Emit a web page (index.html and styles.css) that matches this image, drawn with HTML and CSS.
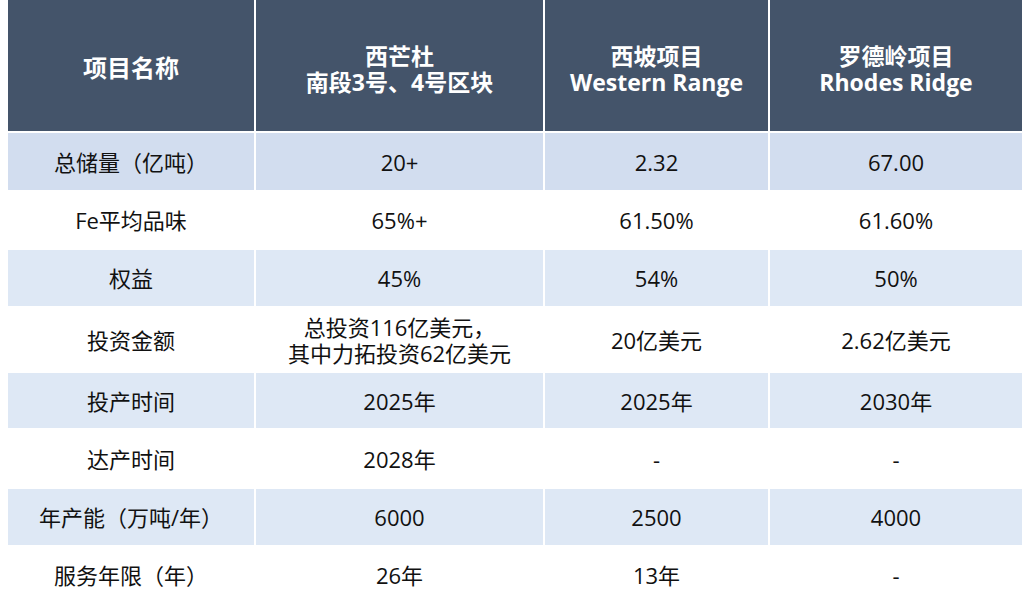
FILE: index.html
```html
<!DOCTYPE html>
<html lang="zh-CN">
<head>
<meta charset="utf-8">
<title>项目对比</title>
<link rel="stylesheet" href="styles.css">
</head>
<body>
<div class="table">
  <div class="cell head head-first">项目名称</div>
  <div class="cell head"><span class="line">西芒杜</span><span class="line">南段3号、4号区块</span></div>
  <div class="cell head"><span class="line">西坡项目</span><span class="line">Western Range</span></div>
  <div class="cell head"><span class="line">罗德岭项目</span><span class="line">Rhodes Ridge</span></div>

  <div class="cell shade1">总储量（亿吨）</div>
  <div class="cell shade1">20+</div>
  <div class="cell shade1">2.32</div>
  <div class="cell shade1">67.00</div>

  <div class="cell">Fe平均品味</div>
  <div class="cell">65%+</div>
  <div class="cell">61.50%</div>
  <div class="cell">61.60%</div>

  <div class="cell shade">权益</div>
  <div class="cell shade">45%</div>
  <div class="cell shade">54%</div>
  <div class="cell shade">50%</div>

  <div class="cell">投资金额</div>
  <div class="cell"><span class="line">总投资116亿美元，</span><span class="line">其中力拓投资62亿美元</span></div>
  <div class="cell">20亿美元</div>
  <div class="cell">2.62亿美元</div>

  <div class="cell shade">投产时间</div>
  <div class="cell shade">2025年</div>
  <div class="cell shade">2025年</div>
  <div class="cell shade">2030年</div>

  <div class="cell">达产时间</div>
  <div class="cell">2028年</div>
  <div class="cell">-</div>
  <div class="cell">-</div>

  <div class="cell shade">年产能（万吨/年）</div>
  <div class="cell shade">6000</div>
  <div class="cell shade">2500</div>
  <div class="cell shade">4000</div>

  <div class="cell">服务年限（年）</div>
  <div class="cell">26年</div>
  <div class="cell">13年</div>
  <div class="cell">-</div>
</div>
</body>
</html>
```

FILE: styles.css
```css
html, body {
  background: #ffffff;
}
body {
  margin: 0 0 0 8px;
  font-family: "Open Sans", "Noto Sans CJK SC", sans-serif;
  color: #111111;
  overflow: hidden;
}
.table {
  width: 1014px;
  display: grid;
  grid-template-columns: 246px 287px 223px 252px;
  grid-template-rows: 131px 57px 56px 56px 63px 55px 57px 56px 56px;
  gap: 2px;
  background: #ffffff;
}
.cell {
  display: flex;
  flex-direction: column;
  align-items: center;
  justify-content: center;
  text-align: center;
  font-size: 22px;
  line-height: 26px;
  background: #ffffff;
  white-space: nowrap;
}
.line {
  display: block;
}
.head {
  background: #44546a;
  color: #ffffff;
  font-weight: 700;
  font-size: 23px;
  line-height: 26px;
  padding-top: 6px;
  box-sizing: border-box;
}
.head-first {
  font-size: 24px;
  padding-top: 4px;
}
.shade1 {
  background: #d2ddef;
}
.shade {
  background: #dee8f5;
}
```
